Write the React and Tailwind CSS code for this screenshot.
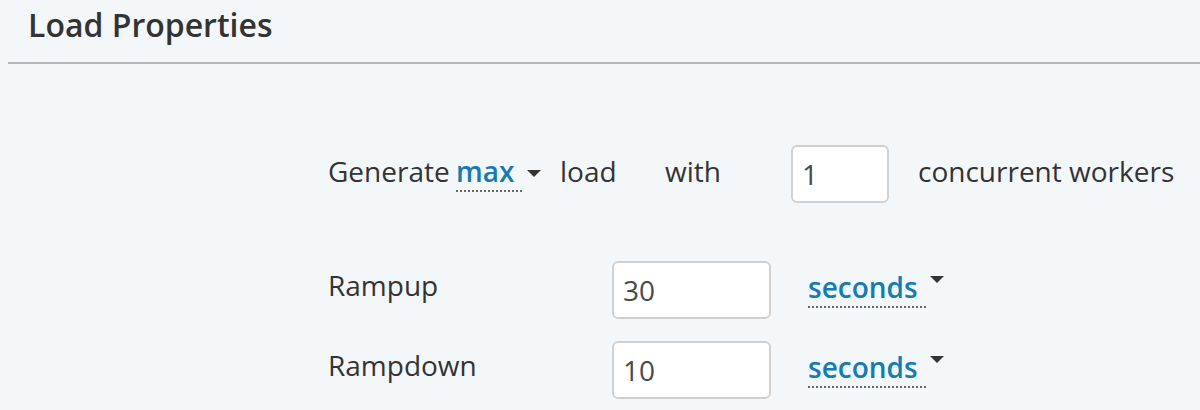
import React from 'react';

const Caret = ({ className = '' }) => (
  <span
    className={`block w-0 h-0 border-l-[7px] border-r-[7px] border-t-[7px] border-l-transparent border-r-transparent border-t-[#333] ${className}`}
  />
);

const Dropdown = ({ value, caretClass }) => (
  <div className="flex items-start">
    <span className="pt-[7px] leading-[38px] pr-[8px] font-semibold text-[#167bb0] border-b-2 border-dotted border-[#666]">
      {value}
    </span>
    <Caret className={caretClass} />
  </div>
);

const NumberInput = ({ value, width }) => (
  <input
    type="text"
    defaultValue={value}
    className={`${width} h-[58px] bg-white border-2 border-[#d0d0d0] rounded-[6px] px-[9px] text-[28px] text-[#4a4a4a] outline-none`}
  />
);

const DurationRow = ({ label, value }) => (
  <div className="flex items-start">
    <div className="w-[284px] pt-[5px] leading-[38px]">{label}</div>
    <NumberInput value={value} width="w-[159px]" />
    <div className="ml-[37px]">
      <Dropdown value="seconds" caretClass="ml-[4px] mt-[15px]" />
    </div>
  </div>
);

export default function App() {
  return (
    <div
      className="w-[1200px] h-[410px] bg-[#f4f7fa] text-[#333] overflow-hidden"
      style={{ fontFamily: '"Open Sans", "Noto Sans", sans-serif' }}
    >
      {/* Header */}
      <div className="h-[62px] pt-[3px] px-[28px]">
        <h1 className="text-[32px] leading-[44px] font-semibold text-[#333]">Load Properties</h1>
      </div>
      <div className="ml-[8px] h-[2px] bg-[#b8b8b8]" />

      {/* Form */}
      <div className="pl-[328px] pt-[81px] text-[28px]">
        <div className="flex items-start">
          <div className="w-[128px] pt-[7px] leading-[38px]">Generate</div>
          <div className="w-[104px]">
            <Dropdown value="max" caretClass="ml-[5px] mt-[25px]" />
          </div>
          <div className="w-[105px] pt-[7px] leading-[38px]">load</div>
          <div className="w-[126px] pt-[7px] leading-[38px]">with</div>
          <NumberInput value="1" width="w-[98px]" />
          <div className="ml-[29px] pt-[7px] leading-[38px] whitespace-nowrap">concurrent workers</div>
        </div>

        <div className="mt-[58px] flex flex-col gap-[22px]">
          <DurationRow label="Rampup" value="30" />
          <DurationRow label="Rampdown" value="10" />
        </div>
      </div>
    </div>
  );
}
